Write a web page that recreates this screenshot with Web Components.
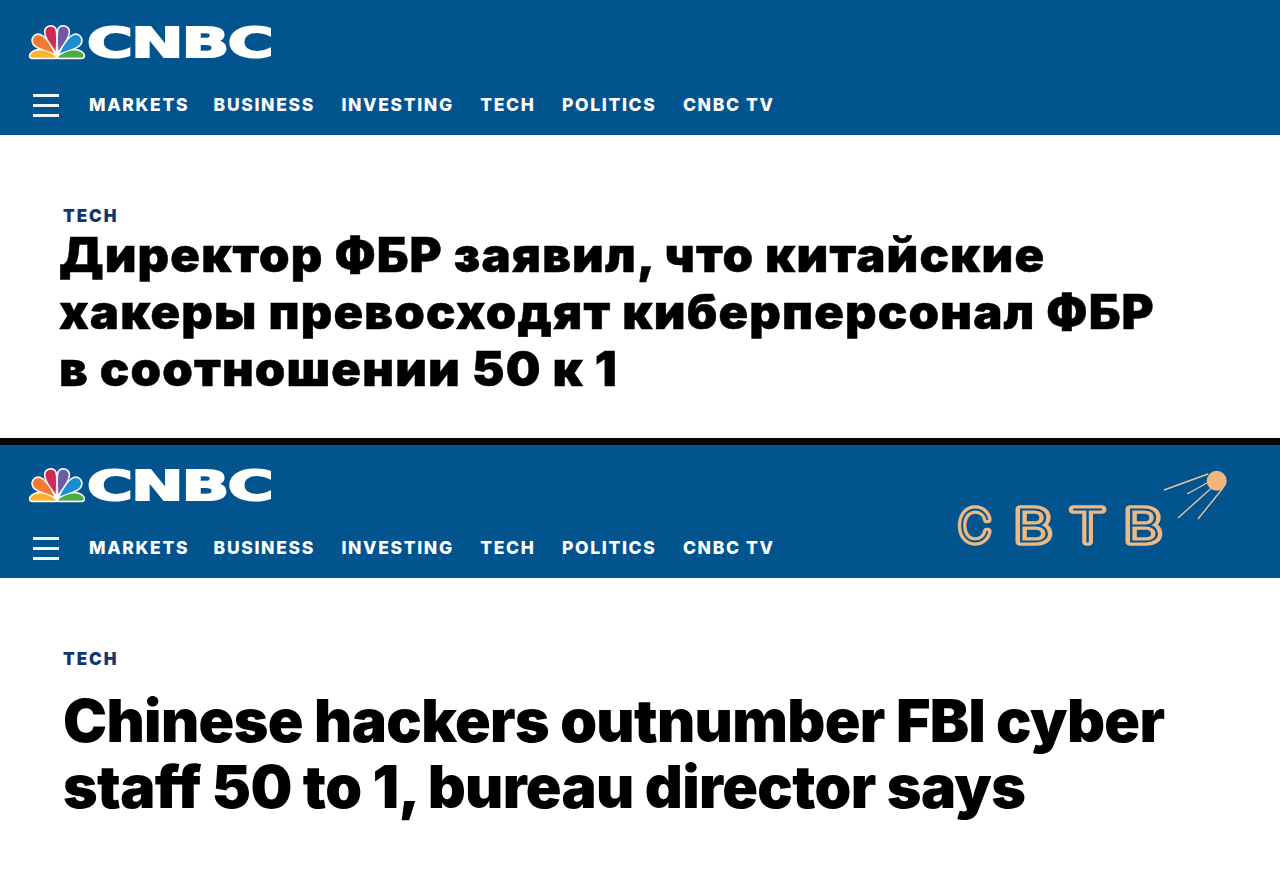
<!DOCTYPE html>
<html lang="ru">
<head>
<meta charset="utf-8">
<title>CNBC</title>
<style>
html, body { margin: 0; padding: 0; background: #fff; }
body { width: 1280px; height: 883px; overflow: hidden; font-family: "Inter", "Liberation Sans", sans-serif; }
.divider { display: block; height: 7px; background: #050505; }
</style>
</head>
<body>
<site-shot>
  <cnbc-header></cnbc-header>
  <story-block label="TECH" pad-top="73" label-gap="1" height="303" size="47.5" line="57" indent="59" tracking="1.13" stretch="1.03" weight="900" family="Inter" bold="0.5">Директор ФБР заявил, что китайские<br>хакеры превосходят киберперсонал ФБР<br>в соотношении 50 к 1</story-block>
  <div class="divider"></div>
  <cnbc-header cropped>
    <cbtb-logo></cbtb-logo>
  </cnbc-header>
  <story-block label="TECH" pad-top="73" label-gap="20" height="305" size="59" line="66" indent="63" tracking="-0.65" stretch="1" weight="900" family="Inter" bold="0">Chinese hackers outnumber FBI cyber<br>staff 50 to 1, bureau director says</story-block>
</site-shot>

<script>
class SiteShot extends HTMLElement {
  constructor() {
    super();
    const shadowRoot = this.attachShadow({ mode: 'open' });
    shadowRoot.innerHTML = `
<style>
:host { display: flex; flex-direction: column; width: 1280px; }
</style>
<slot></slot>
`;
  }
}

class CnbcPeacock extends HTMLElement {
  constructor() {
    super();
    const shadowRoot = this.attachShadow({ mode: 'open' });
    // left three feathers, the right three are their mirror image
    const left = [
      { d: 'M28 32.5 C20 25.5 9 24 4 28.5 C1 31 1.5 34 4.5 34 L28 34 Z', color: '#fbb130' },
      { d: 'M27 30.5 C20 26.5 9 25 5.5 20 C2.5 14.5 7 9 12.5 11 C17.5 13 24 23 27 30.5 Z', color: '#f37a2f' },
      { d: 'M28 28 C24 22 17 14 17 8 C17 2 25 0 27.5 5 C29 9 28.5 20 28 28 Z', color: '#cf2a55' }
    ];
    const right = ['#4bab45', '#1b8ed0', '#6e5ba5'];
    const under = left.map(f => `<path d="${f.d}"/>`).join('');
    const top = left.map((f, i) => `
      <path d="${f.d}" fill="${f.color}"/>
      <path d="${f.d}" fill="${right[i]}" transform="translate(58 0) scale(-1 1)"/>`).join('');
    shadowRoot.innerHTML = `
<style>
:host { display: block; width: 58px; height: 36px; flex: none; }
svg { display: block; overflow: visible; }
</style>
<svg width="58" height="36" viewBox="0 0 58 36">
  <path d="M20 30 L29 8 L38 30 L38 34 L20 34 Z" fill="#fff"/>
  <g fill="#fff" stroke="#fff" stroke-width="2.4" stroke-linejoin="round">
    ${under}
    <g transform="translate(58 0) scale(-1 1)">${under}</g>
  </g>
  <g stroke="#fff" stroke-width="0.8">${top}</g>
</svg>
`;
  }
}

class CnbcHeader extends HTMLElement {
  constructor() {
    super();
    const shadowRoot = this.attachShadow({ mode: 'open' });
    const links = ['MARKETS', 'BUSINESS', 'INVESTING', 'TECH', 'POLITICS', 'CNBC TV'];
    shadowRoot.innerHTML = `
<style>
:host { display: block; position: relative; box-sizing: border-box; height: 135px; padding-top: 2px; background: #02548f; color: #fff; }
:host([cropped]) { height: 133px; padding-top: 0; }
.brand { display: flex; align-items: center; gap: 1px; height: 80px; padding-left: 28px; }
.word {
  font: 700 41px/1 "DejaVu Sans", sans-serif;
  letter-spacing: -1px;
  transform: scaleX(1.52);
  transform-origin: left center;
  -webkit-text-stroke: 2px #fff;
  padding-top: 2px;
}
nav { display: flex; align-items: center; height: 42px; margin-top: 2px; padding-left: 33px; }
.burger { display: flex; flex-direction: column; gap: 7px; width: 26px; margin-right: 30px; }
.burger i { display: block; height: 3px; background: #f2f6fa; }
a { font: 800 17.5px/1 "Inter", sans-serif; letter-spacing: 1.65px; margin-right: 26.5px; color: #fff; }
a:first-of-type { margin-right: 24.5px; }
</style>
<div class="brand"><cnbc-peacock></cnbc-peacock><span class="word">CNBC</span></div>
<nav>
  <div class="burger"><i></i><i></i><i></i></div>
  ${links.map(l => `<a>${l}</a>`).join('')}
</nav>
<slot></slot>
`;
  }
}

class CbtbLogo extends HTMLElement {
  constructor() {
    super();
    const shadowRoot = this.attachShadow({ mode: 'open' });
    const letters = [
      { c: 'С', x: 24.5, sx: 1 },
      { c: 'В', x: 83, sx: 1.33 },
      { c: 'Т', x: 137.5, sx: 1.27 },
      { c: 'В', x: 193, sx: 1.33 }
    ];
    const defs = letters.map((l, i) =>
      `<text id="l${i}" transform="translate(${l.x} 77) scale(${l.sx} 1)">${l.c}</text>`).join('');
    const uses = (fill, width) => letters.map((l, i) =>
      `<use href="#l${i}" fill="${fill}" stroke="${fill}" stroke-width="${width}"/>`).join('');
    shadowRoot.innerHTML = `
<style>
:host { display: block; position: absolute; left: 950px; top: 20px; width: 290px; height: 90px; }
svg { display: block; }
text { font: 100 45px "Inter", sans-serif; text-anchor: middle; stroke-linejoin: round; stroke-linecap: round; }
</style>
<svg width="290" height="90" viewBox="0 0 290 90">
  <defs>${defs}</defs>
  ${uses('#eeb985', 7.5)}
  ${uses('#02548f', 0.8)}
  <g stroke="#e9c39c" stroke-width="1.4" fill="none">
    <line x1="214" y1="25" x2="258" y2="9"/>
    <line x1="237" y1="29" x2="257" y2="18"/>
    <line x1="228" y1="53" x2="267" y2="18"/>
    <line x1="248" y1="54" x2="273" y2="23"/>
  </g>
  <circle cx="266.7" cy="15.7" r="10" fill="#f1b67a"/>
</svg>
`;
  }
}

class StoryBlock extends HTMLElement {
  constructor() {
    super();
    const shadowRoot = this.attachShadow({ mode: 'open' });
    const a = n => this.getAttribute(n);
    shadowRoot.innerHTML = `
<style>
:host { display: block; box-sizing: border-box; height: ${a('height')}px; padding-top: ${a('pad-top')}px; background: #fff; color: #000; }
.label { font: 900 17px/1 "Inter", sans-serif; letter-spacing: 2px; color: #14366f; padding-left: 63px; margin-bottom: ${a('label-gap')}px; }
h1 {
  margin: 0 0 0 ${a('indent')}px;
  font-family: "${a('family')}", "Liberation Sans", sans-serif;
  font-size: ${a('size')}px; line-height: ${a('line')}px; font-weight: ${a('weight')};
  letter-spacing: ${a('tracking')}px; white-space: nowrap;
  -webkit-text-stroke: ${a('bold')}px #000;
  transform: scaleX(${a('stretch')});
  transform-origin: left center;
}
</style>
<div class="label">${a('label')}</div>
<h1><slot></slot></h1>
`;
  }
}

customElements.define('site-shot', SiteShot);
customElements.define('cnbc-peacock', CnbcPeacock);
customElements.define('cnbc-header', CnbcHeader);
customElements.define('cbtb-logo', CbtbLogo);
customElements.define('story-block', StoryBlock);
</script>
</body>
</html>
